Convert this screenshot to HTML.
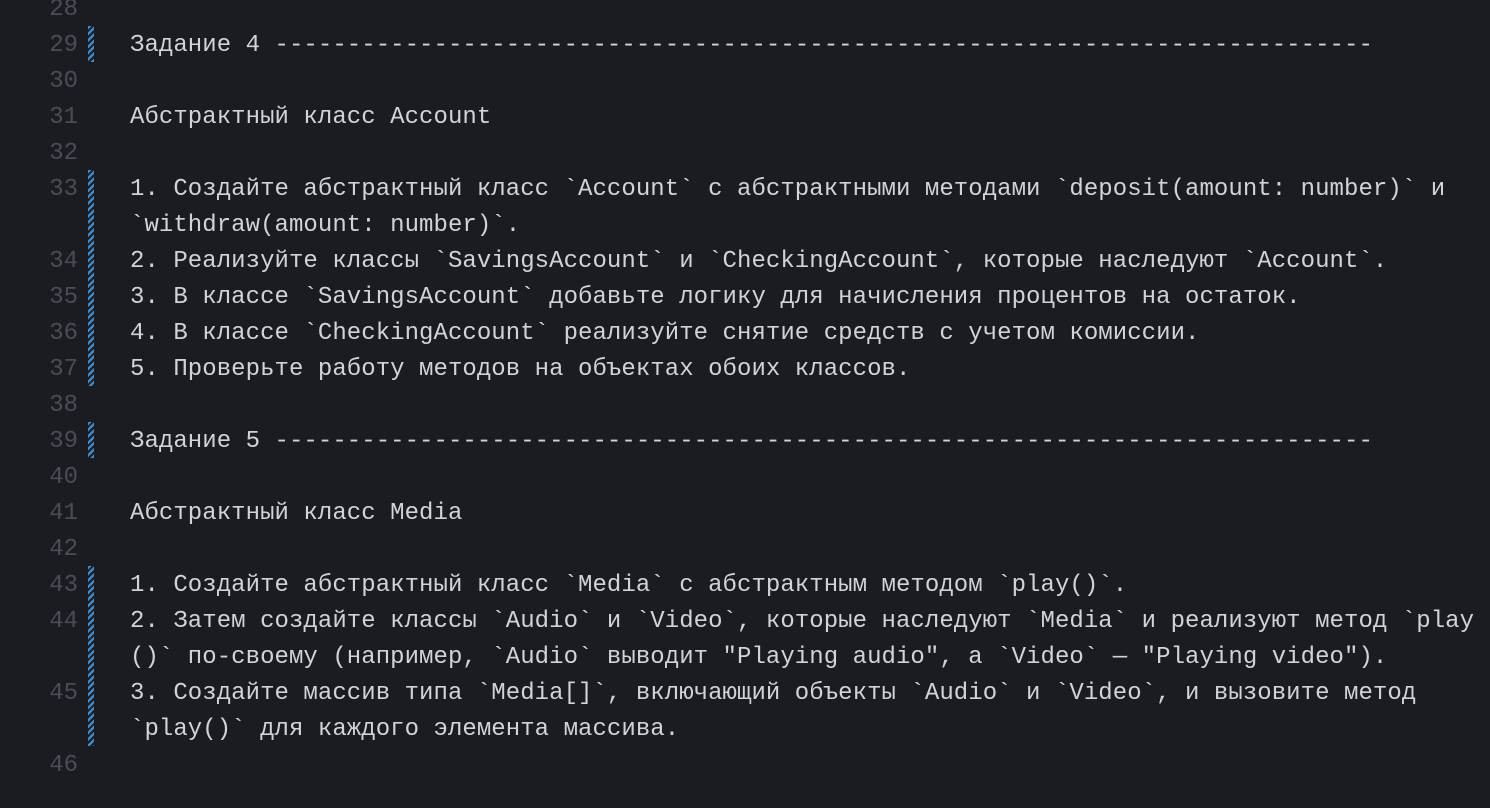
<!DOCTYPE html>
<html><head><meta charset="utf-8"><style>
html,body{margin:0;padding:0;background:#1b1c21;width:1490px;height:808px;overflow:hidden}
body{position:relative;font-family:"Liberation Mono","DejaVu Sans Mono",monospace;font-size:24px}
.r{position:absolute;left:0;height:36px;line-height:36px;white-space:pre;margin-top:2px}
.n{position:absolute;left:0;width:78px;text-align:right;color:#4a4d56}
.t{position:absolute;left:130px;color:#d2d3d6;letter-spacing:0.05px}
.g{position:absolute;left:88px;width:6px;background:repeating-linear-gradient(135deg,#3f88c5 0 2.5px,transparent 2.5px 4.5px)}
</style></head><body>
<div class="g" style="top:26px;height:36px"></div>
<div class="g" style="top:170px;height:216px"></div>
<div class="g" style="top:422px;height:36px"></div>
<div class="g" style="top:566px;height:180px"></div>
<div class="r" style="top:-10px"><span class="n">28</span></div>
<div class="r" style="top:26px"><span class="n">29</span><span class="t">Задание 4 ----------------------------------------------------------------------------</span></div>
<div class="r" style="top:62px"><span class="n">30</span></div>
<div class="r" style="top:98px"><span class="n">31</span><span class="t">Абстрактный класс Account</span></div>
<div class="r" style="top:134px"><span class="n">32</span></div>
<div class="r" style="top:170px"><span class="n">33</span><span class="t">1. Создайте абстрактный класс `Account` с абстрактными методами `deposit(amount: number)` и</span></div>
<div class="r" style="top:206px"><span class="t">`withdraw(amount: number)`.</span></div>
<div class="r" style="top:242px"><span class="n">34</span><span class="t">2. Реализуйте классы `SavingsAccount` и `CheckingAccount`, которые наследуют `Account`.</span></div>
<div class="r" style="top:278px"><span class="n">35</span><span class="t">3. В классе `SavingsAccount` добавьте логику для начисления процентов на остаток.</span></div>
<div class="r" style="top:314px"><span class="n">36</span><span class="t">4. В классе `CheckingAccount` реализуйте снятие средств с учетом комиссии.</span></div>
<div class="r" style="top:350px"><span class="n">37</span><span class="t">5. Проверьте работу методов на объектах обоих классов.</span></div>
<div class="r" style="top:386px"><span class="n">38</span></div>
<div class="r" style="top:422px"><span class="n">39</span><span class="t">Задание 5 ----------------------------------------------------------------------------</span></div>
<div class="r" style="top:458px"><span class="n">40</span></div>
<div class="r" style="top:494px"><span class="n">41</span><span class="t">Абстрактный класс Media</span></div>
<div class="r" style="top:530px"><span class="n">42</span></div>
<div class="r" style="top:566px"><span class="n">43</span><span class="t">1. Создайте абстрактный класс `Media` с абстрактным методом `play()`.</span></div>
<div class="r" style="top:602px"><span class="n">44</span><span class="t">2. Затем создайте классы `Audio` и `Video`, которые наследуют `Media` и реализуют метод `play</span></div>
<div class="r" style="top:638px"><span class="t">()` по-своему (например, `Audio` выводит "Playing audio", а `Video` — "Playing video").</span></div>
<div class="r" style="top:674px"><span class="n">45</span><span class="t">3. Создайте массив типа `Media[]`, включающий объекты `Audio` и `Video`, и вызовите метод</span></div>
<div class="r" style="top:710px"><span class="t">`play()` для каждого элемента массива.</span></div>
<div class="r" style="top:746px"><span class="n">46</span></div>
</body></html>
